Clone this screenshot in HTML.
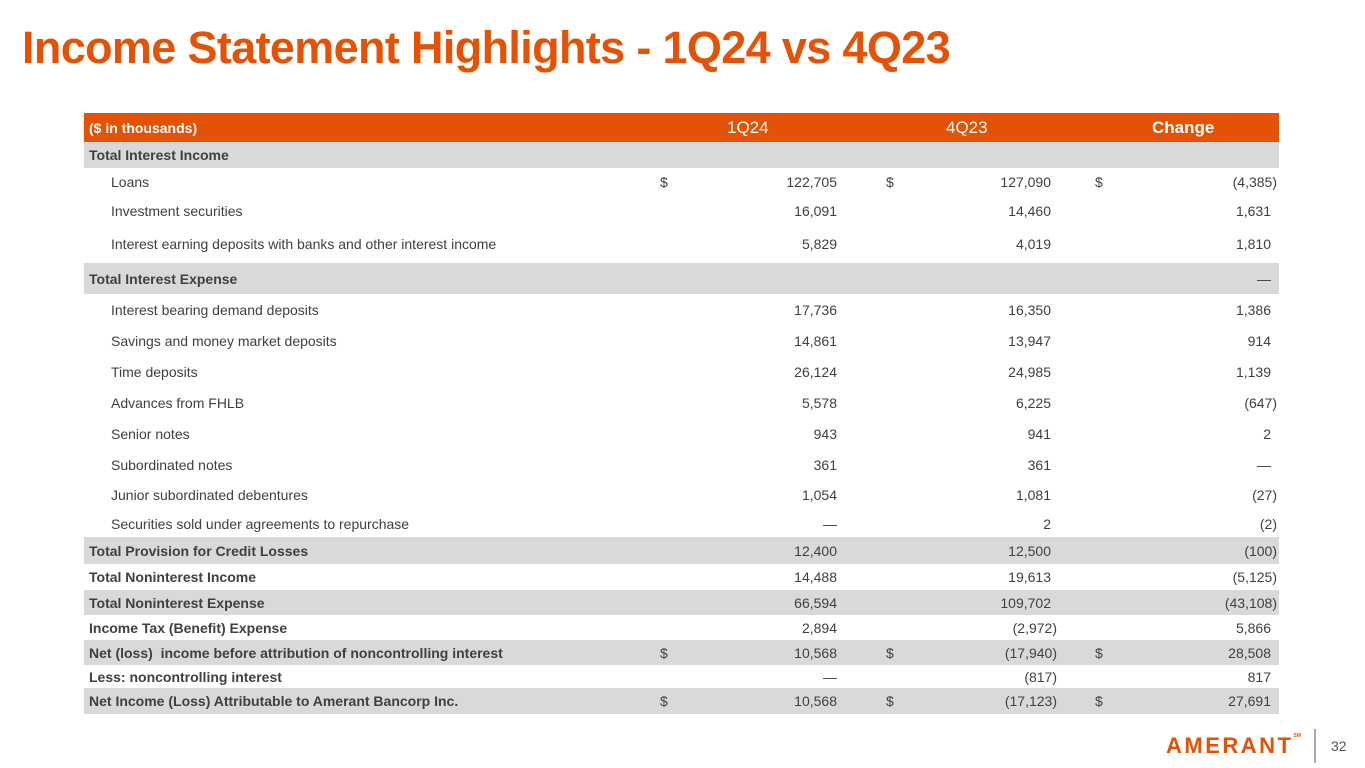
<!DOCTYPE html><html><head><style>
body{margin:0;width:1365px;height:768px;background:#fff;position:relative;overflow:hidden;font-family:"Liberation Sans",sans-serif;color:#404040;font-size:14px}
h1{position:absolute;left:22px;top:22px;margin:0;font-size:45px;font-weight:bold;color:#e35205;letter-spacing:-0.65px}
.r{position:absolute;left:84px;width:1195px}
.g{background:#d9d9d9}
.r span{position:absolute;top:50%;transform:translateY(-50%);white-space:nowrap}
.l{left:5px;font-weight:bold}
.i{left:27px}
.d1{left:576px}.d2{left:802px}.d3{left:1011px}
.a{right:442px}.b{right:228px}.c{right:8px}
.ap{right:436px}.bp{right:222px}.cp{right:2px}
.h{background:#e35205;color:#fff;top:113px;height:29px}
.h span{font-size:17px}
</style></head><body>
<h1>Income Statement Highlights - 1Q24 vs 4Q23</h1>
<div class="r h"><span class="l" style="font-size:14px">($ in thousands)</span><span style="left:643px">1Q24</span><span style="left:862px">4Q23</span><span style="left:1068px;font-weight:bold">Change</span></div>
<div class="r g" style="top:142px;height:26px"><span class="l">Total Interest Income</span></div>
<div class="r" style="top:168px;height:28px"><span class="i">Loans</span><span class="d1">$</span><span class="a">122,705</span><span class="d2">$</span><span class="b">127,090</span><span class="d3">$</span><span class="cp">(4,385)</span></div>
<div class="r" style="top:196px;height:29px"><span class="i">Investment securities</span><span class="a">16,091</span><span class="b">14,460</span><span class="c">1,631</span></div>
<div class="r" style="top:225px;height:38px"><span class="i">Interest earning deposits with banks and other interest income</span><span class="a">5,829</span><span class="b">4,019</span><span class="c">1,810</span></div>
<div class="r g" style="top:263px;height:31px"><span class="l">Total Interest Expense</span><span class="c">—</span></div>
<div class="r" style="top:294px;height:31px"><span class="i">Interest bearing demand deposits</span><span class="a">17,736</span><span class="b">16,350</span><span class="c">1,386</span></div>
<div class="r" style="top:325px;height:31px"><span class="i">Savings and money market deposits</span><span class="a">14,861</span><span class="b">13,947</span><span class="c">914</span></div>
<div class="r" style="top:356px;height:31px"><span class="i">Time deposits</span><span class="a">26,124</span><span class="b">24,985</span><span class="c">1,139</span></div>
<div class="r" style="top:387px;height:31px"><span class="i">Advances from FHLB</span><span class="a">5,578</span><span class="b">6,225</span><span class="cp">(647)</span></div>
<div class="r" style="top:418px;height:31px"><span class="i">Senior notes</span><span class="a">943</span><span class="b">941</span><span class="c">2</span></div>
<div class="r" style="top:449px;height:31px"><span class="i">Subordinated notes</span><span class="a">361</span><span class="b">361</span><span class="c">—</span></div>
<div class="r" style="top:480px;height:30px"><span class="i">Junior subordinated debentures</span><span class="a">1,054</span><span class="b">1,081</span><span class="cp">(27)</span></div>
<div class="r" style="top:510px;height:27px"><span class="i">Securities sold under agreements to repurchase</span><span class="a">—</span><span class="b">2</span><span class="cp">(2)</span></div>
<div class="r g" style="top:537px;height:27px"><span class="l">Total Provision for Credit Losses</span><span class="a">12,400</span><span class="b">12,500</span><span class="cp">(100)</span></div>
<div class="r" style="top:564px;height:26px"><span class="l">Total Noninterest Income</span><span class="a">14,488</span><span class="b">19,613</span><span class="cp">(5,125)</span></div>
<div class="r g" style="top:590px;height:25px"><span class="l">Total Noninterest Expense</span><span class="a">66,594</span><span class="b">109,702</span><span class="cp">(43,108)</span></div>
<div class="r" style="top:615px;height:25px"><span class="l">Income Tax (Benefit) Expense</span><span class="a">2,894</span><span class="bp">(2,972)</span><span class="c">5,866</span></div>
<div class="r g" style="top:640px;height:25px"><span class="l">Net (loss)&nbsp; income before attribution of noncontrolling interest</span><span class="d1">$</span><span class="a">10,568</span><span class="d2">$</span><span class="bp">(17,940)</span><span class="d3">$</span><span class="c">28,508</span></div>
<div class="r" style="top:665px;height:23px"><span class="l">Less: noncontrolling interest</span><span class="a">—</span><span class="bp">(817)</span><span class="c">817</span></div>
<div class="r g" style="top:688px;height:26px"><span class="l">Net Income (Loss) Attributable to Amerant Bancorp Inc.</span><span class="d1">$</span><span class="a">10,568</span><span class="d2">$</span><span class="bp">(17,123)</span><span class="d3">$</span><span class="c">27,691</span></div>
<div style="position:absolute;left:1166px;top:733px;font-size:22px;font-weight:bold;color:#e35205;letter-spacing:2.5px">AMERANT<sup style="font-size:5px;vertical-align:top;letter-spacing:0">SM</sup></div>
<div style="position:absolute;left:1314px;top:729px;width:2px;height:34px;background:#aaa"></div>
<div style="position:absolute;left:1331px;top:738px;font-size:14px;color:#555">32</div>
</body></html>
